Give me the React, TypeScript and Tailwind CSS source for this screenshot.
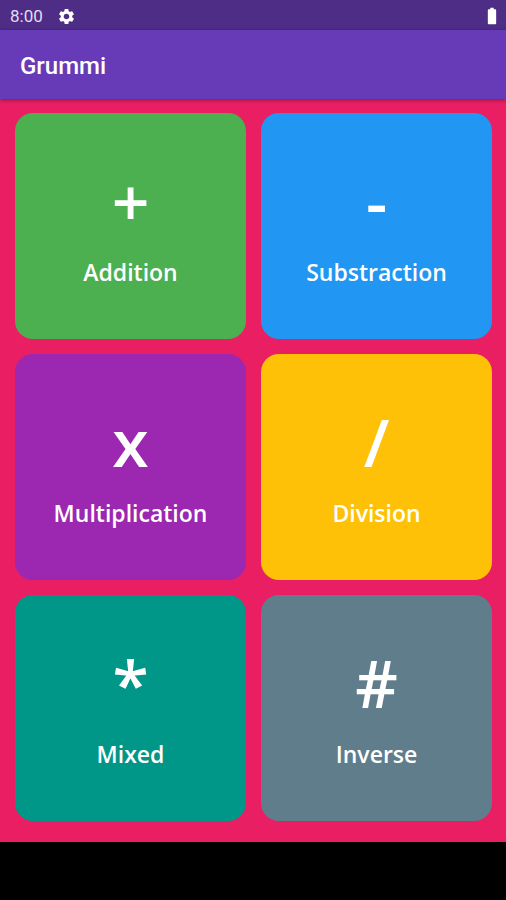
import { MdBatteryFull, MdSettings } from "react-icons/md";

interface Operation {
  symbol: string;
  label: string;
  color: string;
}

const operations: Operation[] = [
  { symbol: "+", label: "Addition", color: "bg-[#4caf50]" },
  { symbol: "-", label: "Substraction", color: "bg-[#2196f3]" },
  { symbol: "x", label: "Multiplication", color: "bg-[#9c27b0]" },
  { symbol: "/", label: "Division", color: "bg-[#ffc107]" },
  { symbol: "*", label: "Mixed", color: "bg-[#009688]" },
  { symbol: "#", label: "Inverse", color: "bg-[#607d8b]" },
];

function StatusBar() {
  return (
    <div className="flex h-[30px] items-center bg-[#4e2d87] pt-0.5 pr-1 pl-2.5 text-white">
      <span className="text-[17px] leading-5 text-[#e4dcf0]">8:00</span>
      <MdSettings className="ml-3.5 size-[19px]" />
      <MdBatteryFull className="ml-auto size-5" />
    </div>
  );
}

function OperationCard({ symbol, label, color }: Operation) {
  return (
    <button
      type="button"
      className={`flex flex-col items-center justify-center gap-5 rounded-[18px] font-['Open_Sans',sans-serif] font-semibold text-white ${color}`}
    >
      <span className="text-[66px] leading-[72px]">{symbol}</span>
      <span className="text-[23px] leading-8">{label}</span>
    </button>
  );
}

export default function App() {
  return (
    <div className="flex min-h-screen flex-col bg-[#e91e63] font-[Roboto,sans-serif]">
      <StatusBar />
      <header className="flex h-[69px] items-center bg-[#673ab7] px-5 pt-0.5 shadow-[0_1px_4px_rgba(0,0,0,0.4)]">
        <h1 className="text-2xl font-medium text-white">Grummi</h1>
      </header>

      <main className="grid flex-1 grid-cols-2 grid-rows-3 gap-[15px] pt-3.5 pr-3.5 pb-[21px] pl-[15px]">
        {operations.map((operation) => (
          <OperationCard key={operation.label} {...operation} />
        ))}
      </main>

      {/* system navigation area */}
      <div className="h-[58px] bg-black" />
    </div>
  );
}
